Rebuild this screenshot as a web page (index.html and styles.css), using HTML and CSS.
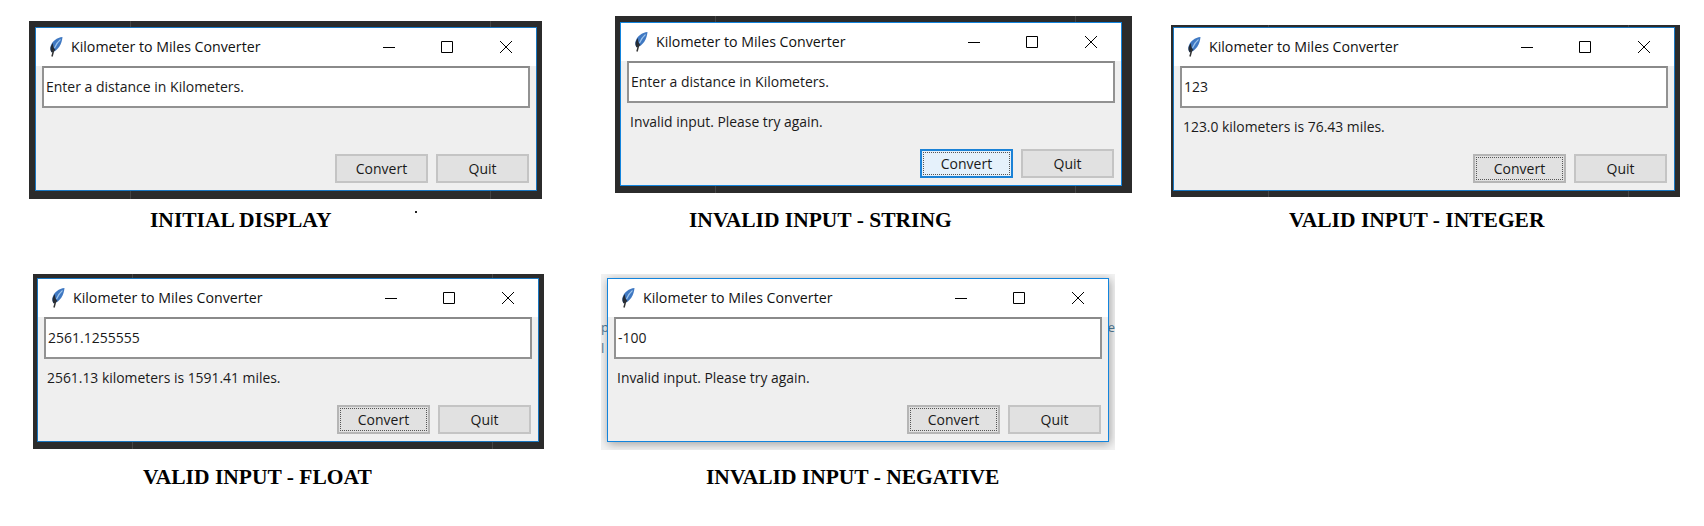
FILE: index.html
```html
<!doctype html>
<html lang="en">
<head>
    <meta charset="UTF-8">
    <title>Kilometer to Miles Converter</title>
    <link rel="stylesheet" href="styles.css">
</head>
<body>
    <svg class="sprite" aria-hidden="true">
        <symbol id="feather" viewBox="0 0 14 20">
            <path d="M13.500 0C8 .5 3 4 1.500 9.500C1 12 1.500 14 3 15.500C9 13.500 13 7 13.500 0Z" fill="#3f78c2"/>
            <path d="M11.500 2.500C9 4.500 7 7.500 5.500 11" stroke="#9cc4ec" stroke-width="1.100" fill="none"/>
            <path d="M4 6C2.500 8 1.200 10 1.500 12.500C1.700 14 2.200 15 3 15.500L6.500 13C4.500 11.500 4 9 4 6Z" fill="#252c36"/>
            <path d="M4.800 12.500L3 19.500" stroke="#333" stroke-width="1.500" fill="none"/>
        </symbol>
        <symbol id="min" viewBox="0 0 12 12"><path d="M0 6.500H12" stroke="#000" fill="none"/></symbol>
        <symbol id="max" viewBox="0 0 12 12"><path d="M.5 .5H11.500V11.500H.5Z" stroke="#000" fill="none"/></symbol>
        <symbol id="close" viewBox="0 0 12 12"><path d="M0 0L12 12M12 0L0 12" stroke="#000" fill="none"/></symbol>
    </svg>

    <div class="row">
        <div class="shot shot1">
            <div class="frame">
                <div class="window">
                    <div class="titlebar">
                        <svg class="feather"><use href="#feather"/></svg>
                        <span class="title">Kilometer to Miles Converter</span>
                        <span class="ctrl"><svg><use href="#min"/></svg></span>
                        <span class="ctrl"><svg><use href="#max"/></svg></span>
                        <span class="ctrl"><svg><use href="#close"/></svg></span>
                    </div>
                    <div class="entry">Enter a distance in Kilometers.</div>
                    <div class="message"></div>
                    <div class="buttons">
                        <span class="btn">Convert</span>
                        <span class="btn">Quit</span>
                    </div>
                </div>
            </div>
            <p class="caption">INITIAL DISPLAY</p>
            <i class="speck"></i>
        </div>

        <div class="shot shot2">
            <div class="frame">
                <div class="window">
                    <div class="titlebar">
                        <svg class="feather"><use href="#feather"/></svg>
                        <span class="title">Kilometer to Miles Converter</span>
                        <span class="ctrl"><svg><use href="#min"/></svg></span>
                        <span class="ctrl"><svg><use href="#max"/></svg></span>
                        <span class="ctrl"><svg><use href="#close"/></svg></span>
                    </div>
                    <div class="entry">Enter a distance in Kilometers.</div>
                    <div class="message">Invalid input. Please try again.</div>
                    <div class="buttons">
                        <span class="btn hover">Convert</span>
                        <span class="btn">Quit</span>
                    </div>
                </div>
            </div>
            <p class="caption">INVALID INPUT - STRING</p>
        </div>

        <div class="shot shot3">
            <div class="frame">
                <div class="window">
                    <div class="titlebar">
                        <svg class="feather"><use href="#feather"/></svg>
                        <span class="title">Kilometer to Miles Converter</span>
                        <span class="ctrl"><svg><use href="#min"/></svg></span>
                        <span class="ctrl"><svg><use href="#max"/></svg></span>
                        <span class="ctrl"><svg><use href="#close"/></svg></span>
                    </div>
                    <div class="entry">123</div>
                    <div class="message">123.0 kilometers is 76.43 miles.</div>
                    <div class="buttons">
                        <span class="btn focus">Convert</span>
                        <span class="btn">Quit</span>
                    </div>
                </div>
            </div>
            <p class="caption">VALID INPUT - INTEGER</p>
        </div>
    </div>

    <div class="row row2">
        <div class="shot shot4">
            <div class="frame">
                <div class="window">
                    <div class="titlebar">
                        <svg class="feather"><use href="#feather"/></svg>
                        <span class="title">Kilometer to Miles Converter</span>
                        <span class="ctrl"><svg><use href="#min"/></svg></span>
                        <span class="ctrl"><svg><use href="#max"/></svg></span>
                        <span class="ctrl"><svg><use href="#close"/></svg></span>
                    </div>
                    <div class="entry">2561.1255555</div>
                    <div class="message">2561.13 kilometers is 1591.41 miles.</div>
                    <div class="buttons">
                        <span class="btn focus">Convert</span>
                        <span class="btn">Quit</span>
                    </div>
                </div>
            </div>
            <p class="caption">VALID INPUT - FLOAT</p>
        </div>

        <div class="shot shot5">
            <div class="frame">
                <span class="ghost ghost-p">p</span>
                <span class="ghost ghost-l">l</span>
                <span class="ghost ghost-e">e</span>
                <div class="window">
                    <div class="titlebar">
                        <svg class="feather"><use href="#feather"/></svg>
                        <span class="title">Kilometer to Miles Converter</span>
                        <span class="ctrl"><svg><use href="#min"/></svg></span>
                        <span class="ctrl"><svg><use href="#max"/></svg></span>
                        <span class="ctrl"><svg><use href="#close"/></svg></span>
                    </div>
                    <div class="entry">-100</div>
                    <div class="message">Invalid input. Please try again.</div>
                    <div class="buttons">
                        <span class="btn focus">Convert</span>
                        <span class="btn">Quit</span>
                    </div>
                </div>
            </div>
            <p class="caption">INVALID INPUT - NEGATIVE</p>
        </div>
    </div>
</body>
</html>
```
FILE: styles.css
```css
*{
    margin: 0;
    padding: 0;
    box-sizing: border-box;
}
body{
    background: #fff;
    font-family: "Open Sans", "Liberation Sans", sans-serif;
    font-size: 14px;
    color: #1a1a1a;
}
.sprite{
    width: 0;
    height: 0;
    position: absolute;
}
/***rows of screenshots***/
.row{
    display: flex;
    align-items: flex-start;
}
.row2{
    margin-top: 42px;
}
.shot{
    position: relative;
}
.shot1{ margin: 21px 0 0 29px; }
.shot2{ margin: 16px 0 0 73px; }
.shot3{ margin: 25px 0 0 39px; }
.shot4{ margin-left: 33px; }
.shot5{ margin-left: 57px; }
/***dark editor behind each window, with its faint seams***/
.frame{
    background-color: #2b2b2b;
    background-image: linear-gradient(#444, #444), linear-gradient(#444, #444);
    background-size: 1px 100%;
    background-repeat: no-repeat;
    background-position: 101px 0, 461px 0;
}
.shot1 .frame{ width: 513px; padding: 6px 5px 8px 6px; }
.shot2 .frame{ width: 517px; padding: 6px 10px 7px 5px; background-position: 100px 0, 460px 0; }
.shot3 .frame{ width: 509px; padding: 2px 5px 6px 2px; background-position: 97px 0, 457px 0; }
.shot4 .frame{ width: 511px; padding: 4px 5px 7px 4px; background-position: 99px 0, 459px 0; }
.shot5 .frame{
    width: 514px;
    padding: 4px 6px 8px 6px;
    background: #f3f3f3;
    position: relative;
    overflow: hidden;
}
.ghost{
    position: absolute;
    left: 0;
    font-size: 13px;
    line-height: 16px;
    color: #4f7b99;
}
.ghost-p{ top: 45px; }
.ghost-l{ top: 66px; }
.ghost-e{ top: 45px; left: auto; right: 0; }
/***tk window***/
.window{
    position: relative;
    width: 502px;
    height: 164px;
    border: 1px solid #1976c0;
    background: #efefef;
    display: flex;
    flex-direction: column;
}
.shot2 .window, .shot5 .window{
    border-color: #1284dd;
}
.shot5 .window{
    box-shadow: 1px 2px 9px rgba(0,0,0,.35);
}
.titlebar{
    height: 38px;
    padding-right: 1px;
    background: #fff;
    display: flex;
    align-items: center;
    flex-shrink: 0;
    color: #111;
}
.feather{
    width: 14px;
    height: 20px;
    margin-left: 13px;
}
.title{
    margin-left: 8px;
    padding-bottom: 2px;
    flex: 1;
    font-size: 14.200px;
}
.ctrl{
    width: 58.500px;
    display: flex;
    justify-content: center;
}
.ctrl svg{
    width: 12px;
    height: 12px;
}
.entry{
    height: 42px;
    margin: 0 6px;
    padding-left: 2px;
    border: 2px solid #929292;
    border-top-color: #8a8a8a;
    background: #fff;
    line-height: 37px;
    flex-shrink: 0;
}
.message{
    height: 39px;
    padding-left: 9px;
    line-height: 37px;
    font-size: 13.900px;
    flex-shrink: 0;
}
.buttons{
    margin-top: 7px;
    padding-right: 7px;
    display: flex;
    justify-content: flex-end;
    gap: 8px;
}
.btn{
    width: 93px;
    height: 29px;
    border: 2px solid #c4c4c4;
    background: #e1e1e1;
    line-height: 25px;
    text-align: center;
}
.btn.focus{
    border-color: #b5b5b5;
    outline: 1px dotted #555;
    outline-offset: -4px;
}
.btn.hover{
    border-color: #1b82d6;
    background: #e5f1fb;
    outline: 1px dotted #555;
    outline-offset: -4px;
}
/***captions***/
.caption{
    font-family: "Liberation Serif", serif;
    font-weight: bold;
    font-size: 21.500px;
    line-height: 24px;
    color: #000;
    white-space: nowrap;
}
.shot1 .caption{ margin: 9px 0 0 121px; }
.shot2 .caption{ margin: 15px 0 0 74px; }
.shot3 .caption{ margin: 11px 0 0 118px; }
.shot4 .caption{ margin: 16px 0 0 110px; }
.shot5 .caption{ margin: 15px 0 0 105px; }
.speck{
    position: absolute;
    left: 386px;
    top: 190px;
    width: 2px;
    height: 2px;
    background: #222;
}
```
